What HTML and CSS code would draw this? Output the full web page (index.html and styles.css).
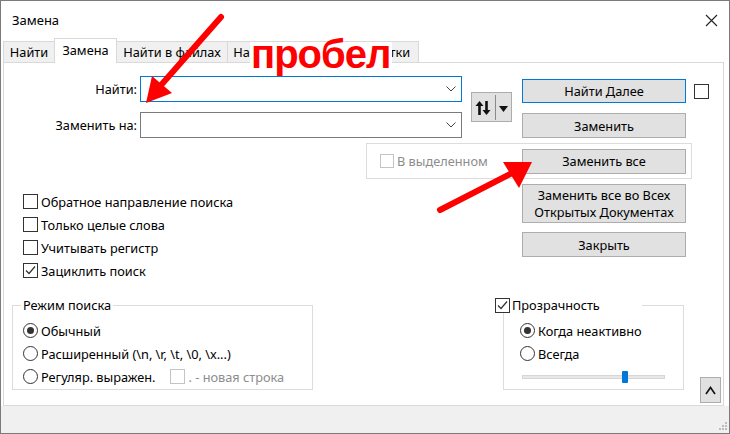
FILE: index.html
```html
<!DOCTYPE html>
<html lang="ru">
<head>
<meta charset="utf-8">
<title>Замена</title>
<link rel="stylesheet" href="styles.css">
</head>
<body>
<div class="window">
  <div class="titlebar">
    <span class="title">Замена</span>
    <svg class="close" width="13" height="13" viewBox="0 0 13 13"><path d="M1 1 L12 12 M12 1 L1 12" stroke="#222" stroke-width="1.1" fill="none"/></svg>
  </div>
  <div class="tabs">
    <div class="tab t1">Найти</div>
    <div class="tab t2 active">Замена</div>
    <div class="tab t3">Найти в файлах</div>
    <div class="tab t4">Найти в проектах</div>
    <div class="tab t5">Пометки</div>
  </div>
  <div class="panel">
    <div class="find-grid">
      <label class="lbl l1">Найти:</label>
      <div class="combo focus c1"><svg class="chev" width="10" height="6" viewBox="0 0 10 6"><polyline points="0.5,0.5 5,5 9.5,0.5" fill="none" stroke="#444" stroke-width="1"/></svg></div>
      <label class="lbl l2">Заменить на:</label>
      <div class="combo c2"><svg class="chev" width="10" height="6" viewBox="0 0 10 6"><polyline points="0.5,0.5 5,5 9.5,0.5" fill="none" stroke="#444" stroke-width="1"/></svg></div>
      <div class="swap">
        <svg width="39" height="28" viewBox="0 0 39 28">
          <polygon points="3.5,13 7.5,8 11.5,13" fill="#111"/>
          <rect x="6.2" y="12" width="2.6" height="10" fill="#111"/>
          <rect x="13.2" y="8" width="2.6" height="10" fill="#111"/>
          <polygon points="10.5,17 14.5,22 18.5,17" fill="#111"/>
          <line x1="23.5" y1="2" x2="23.5" y2="27" stroke="#8a8a8a" stroke-width="1"/>
          <polygon points="27,13 36,13 31.5,19" fill="#111"/>
        </svg>
      </div>
      <button class="btn default b1">Найти Далее</button>
      <span class="box b1cb"></span>
      <button class="btn b2">Заменить</button>
    </div>

    <div class="selframe">
      <span class="chk disabled"><span class="box"></span><span>В выделенном</span></span>
      <button class="btn replall">Заменить все</button>
    </div>

    <div class="mid">
      <div class="options">
        <div class="chk row"><span class="box"></span><span>Обратное направление поиска</span></div>
        <div class="chk row"><span class="box"></span><span>Только целые слова</span></div>
        <div class="chk row"><span class="box"></span><span>Учитывать регистр</span></div>
        <div class="chk row"><span class="box checked"><svg width="13" height="13" viewBox="0 0 13 13"><polyline points="2,6.5 5,9.5 11,2.5" fill="none" stroke="#333" stroke-width="1.2"/></svg></span><span>Зациклить поиск</span></div>
      </div>
      <div class="btncol">
        <button class="btn big">Заменить все во Всех<br>Открытых Документах</button>
        <button class="btn close-btn">Закрыть</button>
      </div>
    </div>

    <div class="bottom">
      <div class="group mode">
        <div class="legend">Режим поиска</div>
        <div class="chk row"><span class="radio on"></span><span>Обычный</span></div>
        <div class="chk row"><span class="radio"></span><span>Расширенный (\n, \r, \t, \0, \x...)</span></div>
        <div class="chk row"><span class="radio"></span><span>Регуляр. выражен.</span><span class="chk disabled nl"><span class="box"></span><span>. - новая строка</span></span></div>
      </div>
      <div class="group transp">
        <div class="legend tlegend"><span class="box checked"><svg width="13" height="13" viewBox="0 0 13 13"><polyline points="2,6.5 5,9.5 11,2.5" fill="none" stroke="#333" stroke-width="1.2"/></svg></span><span>Прозрачность</span></div>
        <div class="chk row"><span class="radio on"></span><span>Когда неактивно</span></div>
        <div class="chk row"><span class="radio"></span><span>Всегда</span></div>
        <div class="slider-row"><div class="track"><span class="thumb"></span></div></div>
      </div>
      <button class="btn up">
        <svg width="11" height="9" viewBox="0 0 11 9"><polyline points="1,8 5.5,1.5 10,8" fill="none" stroke="#111" stroke-width="1.6"/></svg>
      </button>
    </div>
  </div>
  <div class="status">
    <svg class="grip" width="10" height="10" viewBox="0 0 10 10">
      <rect x="7" y="1" width="2" height="2" fill="#bdbdbd"/>
      <rect x="4" y="4" width="2" height="2" fill="#bdbdbd"/>
      <rect x="7" y="4" width="2" height="2" fill="#bdbdbd"/>
      <rect x="1" y="7" width="2" height="2" fill="#bdbdbd"/>
      <rect x="4" y="7" width="2" height="2" fill="#bdbdbd"/>
      <rect x="7" y="7" width="2" height="2" fill="#bdbdbd"/>
    </svg>
  </div>
</div>

<span class="note">пробел</span>
<svg class="arrows" width="730" height="434" viewBox="0 0 730 434">
  <line x1="221" y1="17" x2="162" y2="84" stroke="#ff0000" stroke-width="6" stroke-linecap="round"/>
  <polygon points="146,103 152,76 172,93" fill="#ff0000"/>
  <line x1="440" y1="210" x2="514" y2="172" stroke="#ff0000" stroke-width="6" stroke-linecap="round"/>
  <polygon points="532,162 503,162 519,188" fill="#ff0000"/>
</svg>
</body>
</html>
```

FILE: styles.css
```css
* { box-sizing: border-box; }
html, body { margin: 0; padding: 0; }
body {
  position: relative;
  width: 730px;
  height: 434px;
  overflow: hidden;
  background: #fff;
  font-family: "Noto Sans", "Open Sans", sans-serif;
  font-size: 12.75px;
  color: #000;
}
.window {
  width: 730px;
  height: 434px;
  border: 1px solid #7a7a7a;
  display: flex;
  flex-direction: column;
  background: #fff;
}
.titlebar {
  height: 37px;
  flex: none;
  display: flex;
  align-items: center;
  padding-left: 11px;
  padding-top: 1px;
}
.title { font-size: 13px; }
.close { margin-left: auto; margin-right: 11px; }

.tabs {
  height: 24px;
  flex: none;
  display: flex;
  align-items: flex-end;
  padding-left: 2px;
  position: relative;
  z-index: 1;
}
.tab {
  height: 21px;
  border: 1px solid #d9d9d9;
  border-bottom: none;
  background: #f0f0f0;
  margin-left: -1px;
  display: flex;
  align-items: center;
  justify-content: center;
  white-space: nowrap;
  overflow: hidden;
  padding-bottom: 1px;
}
.tab.t1 { margin-left: 0; width: 52px; }
.tab.t2 { width: 63px; }
.tab.t3 { width: 112px; }
.tab.t4 { width: 121px; }
.tab.t5 { width: 72px; }
.tab.active {
  height: 25px;
  background: #fff;
  margin-bottom: -1px;
  position: relative;
  padding-bottom: 3px;
}

.panel {
  margin-left: 2px;
  width: 721px;
  height: 344px;
  flex: none;
  border: 1px solid #d9d9d9;
  display: flex;
  flex-direction: column;
}

.find-grid {
  margin-top: 13px;
  display: grid;
  grid-template-columns: 136px 322px 9px 41px 10px 164px 8px 16px;
  grid-template-rows: 26px 10px 26px;
}
.lbl {
  grid-column: 1;
  text-align: right;
  padding-right: 3px;
  align-self: center;
  white-space: nowrap;
}
.l1 { grid-row: 1; }
.l2 { grid-row: 3; }
.combo {
  grid-column: 2;
  border: 1px solid #7a7a7a;
  background: #fff;
  display: flex;
  align-items: center;
  justify-content: flex-end;
  padding-right: 5px;
}
.combo.focus { border-color: #0078d7; }
.c1 { grid-row: 1; }
.c2 { grid-row: 3; }
.chev { display: block; }

.swap {
  grid-column: 4;
  grid-row: 1 / 4;
  align-self: center;
  height: 30px;
  background: #e1e1e1;
  border: 1px solid #adadad;
}
.swap svg { display: block; }

.btn {
  font-family: inherit;
  font-size: 12.75px;
  color: #000;
  background: #e1e1e1;
  border: 1px solid #adadad;
  padding: 0;
  margin: 0;
  width: 164px;
  height: 24px;
  line-height: 16px;
}
.btn.default { border-color: #0078d7; }
.b1 { grid-column: 6; grid-row: 1; margin-top: 3px; }
.b2 { grid-column: 6; grid-row: 3; margin-top: 1px; height: 25px; }

.box {
  width: 15px;
  height: 15px;
  border: 1px solid #333;
  background: #fff;
  flex: none;
  display: flex;
  align-items: center;
  justify-content: center;
}
.box svg { display: block; }
.b1cb { grid-column: 8; grid-row: 1; margin-top: 8px; }

.chk {
  display: flex;
  align-items: center;
  gap: 3px;
  white-space: nowrap;
}
.chk.disabled { color: #8d8d8d; }
.chk.disabled .box { border-color: #c4c4c4; }

.selframe {
  margin-top: 5px;
  margin-left: 362px;
  width: 326px;
  height: 36px;
  border: 1px solid #dcdcdc;
  display: flex;
  align-items: center;
  padding-left: 13px;
  padding-right: 5px;
}
.selframe .box { width: 14px; height: 14px; }
.replall { margin-left: auto; height: 25px; }

.mid {
  margin-top: 5px;
  display: flex;
}
.options {
  width: 518px;
  padding-left: 19px;
  padding-top: 6px;
}
.row { height: 23px; }
.btncol {
  display: flex;
  flex-direction: column;
}
.btn.big { height: 39px; line-height: 17px; }
.close-btn { margin-top: 9px; height: 25px; }

.bottom {
  margin-top: auto;
  display: flex;
  align-items: flex-end;
}
.group {
  height: 85px;
  border: 1px solid #dcdcdc;
  margin-bottom: 15px;
}
.legend {
  margin-top: -9px;
  height: 16px;
  line-height: 16px;
  background: #fff;
  width: fit-content;
  padding: 0 2px;
  margin-bottom: 6px;
  white-space: nowrap;
}
.mode {
  margin-left: 8px;
  width: 301px;
  padding-left: 10px;
}
.mode .legend { margin-left: -2px; }
.radio {
  width: 15px;
  height: 15px;
  border: 1px solid #333;
  border-radius: 50%;
  background: #fff;
  flex: none;
  display: flex;
  align-items: center;
  justify-content: center;
}
.radio.on::after {
  content: "";
  width: 7px;
  height: 7px;
  border-radius: 50%;
  background: #333;
}
.nl { margin-left: 11px; gap: 4px; }

.transp {
  margin-left: 190px;
  width: 181px;
  padding-left: 16px;
}
.tlegend {
  margin-left: -25px;
  width: 147px;
  display: flex;
  align-items: center;
  gap: 2px;
  padding: 0;
}
.slider-row {
  height: 23px;
  display: flex;
  align-items: center;
  padding-left: 2px;
}
.track {
  position: relative;
  width: 143px;
  height: 4px;
  background: #e7e7e7;
  border: 1px solid #d6d6d6;
}
.thumb {
  position: absolute;
  left: 99px;
  top: -5px;
  width: 6px;
  height: 12px;
  background: #0078d7;
  border-radius: 1px;
}
.btn.up {
  width: 21px;
  height: 26px;
  margin-left: 16px;
  margin-bottom: 2px;
  display: flex;
  align-items: center;
  justify-content: center;
}

.status {
  flex: 1;
  background: #f0f0f0;
  display: flex;
  align-items: flex-end;
  justify-content: flex-end;
  padding: 0 1px 2px 0;
}
.grip { display: block; }

.note {
  position: absolute;
  z-index: 5;
  left: 250px;
  top: 42px;
  height: 34px;
  padding: 0 2px 0 1px;
  background: #fff;
  font-family: "Liberation Sans", Arial, sans-serif;
  font-weight: bold;
  font-size: 40px;
  line-height: 24px;
  letter-spacing: -1px;
  color: #ff0000;
  white-space: nowrap;
}
.arrows {
  position: absolute;
  z-index: 6;
  left: 0;
  top: 0;
  pointer-events: none;
}
```
